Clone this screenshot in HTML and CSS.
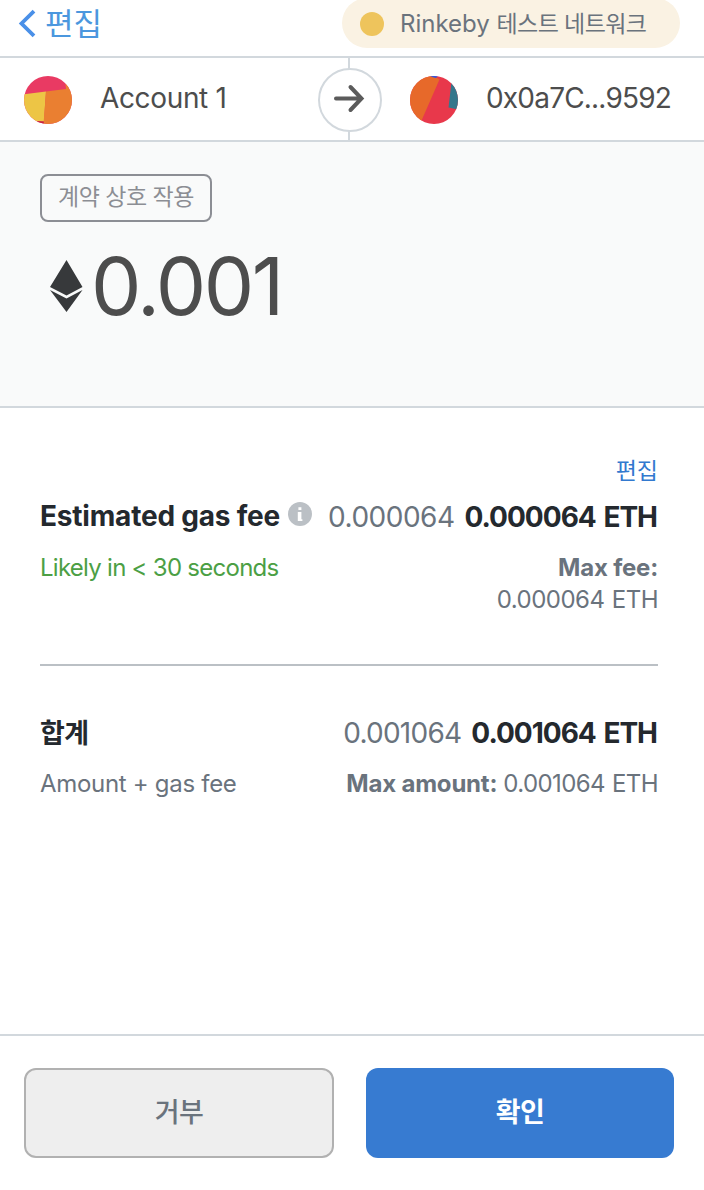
FILE: index.html
```
<!DOCTYPE html>
<html lang="ko">
<head>
    <meta charset="UTF-8">
    <meta name="viewport" content="width=device-width, initial-scale=1.0">
    <title>MetaMask Notification</title>
    <link rel="stylesheet" href="styles.css">
</head>
<body>
    <div class="container">
        <header class="top-bar">
            <a class="back-link" href="#">
                <svg class="back-icon" width="18" height="30" viewBox="0 0 18 30">
                    <path d="M16 2.2 L3.5 14.5 L16 26.8" fill="none" stroke="#4a90e8" stroke-width="3.8"/>
                </svg>
                <span class="back-text">편집</span>
            </a>
            <div class="network">
                <span class="network-dot"></span>
                <span class="network-name">Rinkeby <span class="ko">테스트 네트워크</span></span>
            </div>
        </header>

        <div class="accounts">
            <div class="account sender">
                <svg class="avatar" width="48" height="48" viewBox="0 0 48 48">
                    <clipPath id="clip1"><circle cx="24" cy="24" r="24"/></clipPath>
                    <g clip-path="url(#clip1)">
                        <rect width="48" height="48" fill="#e93a63"/>
                        <path d="M0 18.3 L22 15.5 L20 45.5 L0 44.5 Z" fill="#edc545"/>
                        <path d="M22 15.5 L42 13 L41.5 8 L48 8 V48 H19.5 Z" fill="#ea7f31"/>
                        <path d="M12 45 L19.8 45.5 L19.5 48 H12 Z" fill="#c4243f"/>
                    </g>
                </svg>
                <span class="account-name">Account 1</span>
            </div>
            <div class="arrow">
                <svg width="32" height="32" viewBox="0 0 32 32">
                    <path d="M2 14.5 H27 M16.5 3 L27.5 14.5 L16.5 26" fill="none" stroke="#5b5b5b" stroke-width="4" stroke-linecap="round"/>
                </svg>
            </div>
            <div class="account recipient">
                <svg class="avatar" width="48" height="48" viewBox="0 0 48 48">
                    <clipPath id="clip2"><circle cx="24" cy="24" r="24"/></clipPath>
                    <g clip-path="url(#clip2)">
                        <rect width="48" height="48" fill="#e8384b"/>
                        <path d="M0 0 H24 L29.5 3.5 L10 48 H0 Z" fill="#e7692a"/>
                        <path d="M20 0 H28 L26 2 L22 1 Z" fill="#2d55e0"/>
                        <path d="M41.5 6 L38.5 31.5 L48 33.5 V6 Z" fill="#34778c"/>
                    </g>
                </svg>
                <span class="account-name address">0x0a7C...9592</span>
            </div>
        </div>

        <section class="summary">
            <div class="action-tag">계약 상호 작용</div>
            <div class="amount">
                <svg width="34" height="54" viewBox="0 0 34 54">
                    <path d="M16.5 1 L32.5 28 L16.5 36.5 L0 28 Z M0 31 L16.5 39.5 L32.5 31 L16.5 53 Z" fill="#37393b"/>
                </svg>
                <span class="amount-value">0.001</span>
            </div>
        </section>

        <main class="details">
            <a class="edit-link" href="#">편집</a>
            <div class="row">
                <div class="label">
                    <span class="gas-label">Estimated gas fee</span>
                    <svg class="info-icon" width="24" height="24" viewBox="0 0 24 24">
                        <circle cx="12" cy="12" r="12" fill="#bbc0c5"/>
                        <path d="M10.4 5.2 H13.4 V8 H10.4 Z M9.8 10 H13.4 V17.2 H14.4 V19 H9.8 Z" fill="#fff"/>
                    </svg>
                </div>
                <div class="values">
                    <span class="fiat">0.000064</span>
                    <span class="eth">0.000064 ETH</span>
                </div>
            </div>
            <div class="sub-row">
                <span class="likely">Likely in &lt; 30 seconds</span>
                <div class="max-fee">
                    <b>Max fee:</b>
                    <span class="max-value">0.000064 ETH</span>
                </div>
            </div>

            <hr class="divider">

            <div class="row">
                <div class="label total-label">합계</div>
                <div class="values">
                    <span class="fiat total-fiat">0.001064</span>
                    <span class="eth">0.001064 ETH</span>
                </div>
            </div>
            <div class="sub-row">
                <span class="sub-label">Amount + gas fee</span>
                <div class="max-amount">
                    <b>Max amount:</b>
                    <span class="max-value total-max">0.001064 ETH</span>
                </div>
            </div>
        </main>

        <footer class="footer">
            <button class="button reject">거부</button>
            <button class="button confirm">확인</button>
        </footer>
    </div>
</body>
</html>
```
FILE: styles.css
```
* {
    margin: 0;
    padding: 0;
    box-sizing: border-box;
}

body {
    background-color: #ffffff;
    font-family: Inter, "Noto Sans CJK KR", sans-serif;
    color: #6a737d;
}

a {
    text-decoration: none;
}

.container {
    width: 704px;
    height: 1190px;
    display: flex;
    flex-direction: column;
    overflow: hidden;
}

.top-bar {
    height: 58px;
    flex-shrink: 0;
    display: flex;
    justify-content: space-between;
    align-items: flex-start;
    padding: 0 24px 0 18px;
    border-bottom: 2px solid #d2d8dd;
}

.back-link {
    height: 48px;
    display: flex;
    align-items: center;
    gap: 9px;
    color: #4b97de;
    font-size: 31px;
    line-height: 44px;
}

.back-text {
    margin-top: -1px;
}

.network {
    width: 338px;
    height: 50px;
    margin-top: -2px;
    padding-left: 18px;
    display: flex;
    align-items: center;
    gap: 16px;
    border-radius: 25px;
    background-color: #faf2e3;
    font-size: 24px;
    white-space: nowrap;
}

.network-dot {
    width: 24px;
    height: 24px;
    margin-top: 2px;
    border-radius: 50%;
    background-color: #eec45c;
}

.network-name {
    margin-top: -2px;
}

.ko {
    font-size: 23px;
    letter-spacing: -0.6px;
}

.accounts {
    height: 84px;
    flex-shrink: 0;
    display: flex;
    align-items: center;
    padding-top: 2px;
    border-bottom: 2px solid #d2d8dd;
    background: linear-gradient(#d2d8dd, #d2d8dd) 348px 0 / 2px 100% no-repeat;
    color: #4d4d4d;
}

.account {
    display: flex;
    align-items: center;
    gap: 28px;
    font-size: 28px;
    white-space: nowrap;
}

.account-name {
    margin-top: -4px;
    letter-spacing: -0.35px;
}

.address {
    letter-spacing: -0.8px;
}

.sender {
    width: 318px;
    padding-left: 24px;
}

.recipient {
    padding-left: 28px;
}

.arrow {
    width: 64px;
    height: 64px;
    display: flex;
    align-items: center;
    justify-content: center;
    border: 2px solid #d2d8dd;
    border-radius: 50%;
    background-color: #ffffff;
}

.summary {
    height: 266px;
    flex-shrink: 0;
    padding: 32px 40px;
    border-bottom: 2px solid #d2d8dd;
    background-color: #f9fafa;
}

.action-tag {
    width: 172px;
    height: 48px;
    border: 2px solid #8c8e94;
    border-radius: 8px;
    color: #8c8e94;
    font-size: 23px;
    line-height: 43px;
    text-align: center;
    letter-spacing: -0.5px;
}

.amount {
    height: 96px;
    margin-top: 16px;
    padding-left: 10px;
    display: flex;
    align-items: center;
    gap: 7px;
    color: #4d4d4d;
    font-size: 80px;
    line-height: 96px;
    letter-spacing: -2.4px;
}

.details {
    flex: 1;
    padding: 46px 46px 0 40px;
}

.edit-link {
    display: block;
    height: 32px;
    color: #3279cf;
    font-size: 23px;
    line-height: 34px;
    text-align: right;
}

.row {
    height: 60px;
    display: flex;
    justify-content: space-between;
    align-items: center;
    font-size: 28px;
    color: #24292e;
    white-space: nowrap;
}

.label {
    display: flex;
    gap: 8px;
    font-weight: 700;
}

.gas-label {
    letter-spacing: -0.2px;
}

.total-label {
    margin-top: -2px;
    font-size: 27px;
    letter-spacing: -0.5px;
}

.info-icon {
    margin-top: 3px;
}

.values {
    display: flex;
    gap: 10px;
    padding-top: 1px;
}

.fiat {
    color: #6a737d;
    letter-spacing: -0.5px;
}

.total-fiat {
    letter-spacing: -0.75px;
}

.eth {
    margin-right: 1px;
    font-weight: 700;
    letter-spacing: -1px;
    word-spacing: 2px;
}

.sub-row {
    display: flex;
    justify-content: space-between;
    font-size: 24px;
    line-height: 32px;
    white-space: nowrap;
    padding-top: 6px;
}

.likely {
    color: #4c9f45;
    letter-spacing: -0.73px;
}

.sub-label {
    letter-spacing: -0.3px;
}

.max-fee {
    display: flex;
    flex-direction: column;
    align-items: flex-end;
}

.max-amount {
    display: flex;
    gap: 6px;
}

.max-value {
    letter-spacing: -0.5px;
    word-spacing: 1px;
}

.total-max {
    letter-spacing: -0.6px;
}

b {
    font-weight: 700;
    letter-spacing: -0.2px;
}

.divider {
    height: 2px;
    margin: 48px 0 36px;
    border: none;
    background-color: #bbc0c5;
}

.footer {
    height: 156px;
    flex-shrink: 0;
    display: flex;
    gap: 32px;
    padding: 32px 30px 32px 24px;
    border-top: 2px solid #d2d8dd;
}

.button {
    width: 308px;
    height: 90px;
    padding-bottom: 6px;
    border: none;
    border-radius: 12px;
    font-family: inherit;
    font-size: 27px;
    font-weight: 500;
    letter-spacing: -0.5px;
    cursor: pointer;
}

.reject {
    width: 310px;
    border: 2px solid #b1b1b1;
    background-color: #eeeeee;
    color: #6a737d;
}

.confirm {
    background-color: #377bd1;
    color: #ffffff;
    font-weight: 700;
}
```
